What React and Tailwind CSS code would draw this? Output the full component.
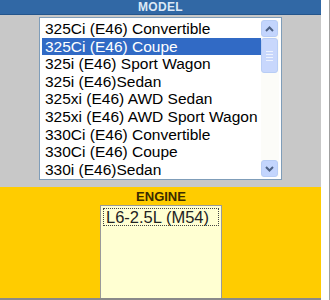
const models = [
  '325Ci (E46) Convertible',
  '325Ci (E46) Coupe',
  '325i (E46) Sport Wagon',
  '325i (E46)Sedan',
  '325xi (E46) AWD Sedan',
  '325xi (E46) AWD Sport Wagon',
  '330Ci (E46) Convertible',
  '330Ci (E46) Coupe',
  '330i (E46)Sedan',
]

function ScrollButton({ up }) {
  return (
    <div className="h-[17px] w-[17px] rounded-[3px] border border-[#b8cdf5] bg-[#c3d5fd] flex items-center justify-center">
      <svg width="9" height="6" viewBox="0 0 9 6">
        <path
          d={up ? 'M1 5 L4.5 1.5 L8 5' : 'M1 1 L4.5 4.5 L8 1'}
          fill="none"
          stroke="#4d6185"
          strokeWidth="2"
        />
      </svg>
    </div>
  )
}

export default function App() {
  return (
    <div className="w-[330px] h-[300px] flex bg-white" style={{ fontFamily: '"Liberation Sans", Arial, sans-serif' }}>
      <div className="w-[321px] flex flex-col">
        {/* Model */}
        <div className="h-[15px] bg-[#3168a5] border-b border-[#24558c] flex items-center justify-center">
          <span className="text-[12px] font-bold text-[#dce8f6] leading-none tracking-[0.3px]">MODEL</span>
        </div>
        <div className="h-[172px] bg-[#c8c8c8] pt-[2px] pl-[39px]">
          <div className="w-[243px] h-[163px] border border-[#7f9db9] bg-white flex p-[2px]">
            <div className="flex-1 flex flex-col">
              {models.map((m, i) => (
                <div
                  key={m}
                  className={
                    'h-[17.6px] pl-[3px] text-[15.5px] leading-[17.6px] whitespace-nowrap ' +
                    (i === 1 ? 'bg-[#316ac5] text-white' : 'text-black')
                  }
                >
                  {m}
                </div>
              ))}
            </div>
            <div className="w-[18px] bg-[#fcfcf8] flex flex-col justify-between">
              <ScrollButton up />
              <div className="flex-1 pt-[1px]">
                <div className="h-[35px] w-[17px] rounded-[3px] border border-[#b8cdf5] bg-[#c8d7fc] flex flex-col items-center justify-center gap-[2px]">
                  <div className="w-[7px] h-px bg-[#eef3fe]"></div>
                  <div className="w-[7px] h-px bg-[#eef3fe]"></div>
                  <div className="w-[7px] h-px bg-[#eef3fe]"></div>
                  <div className="w-[7px] h-px bg-[#eef3fe]"></div>
                </div>
              </div>
              <ScrollButton />
            </div>
          </div>
        </div>
        {/* Engine */}
        <div className="flex-1 bg-[#ffcc00] flex flex-col items-center border-b-2 border-[#8a8a8a]">
          <div className="h-[18px] flex items-center text-[13px] font-bold text-[#3a2a00] leading-none pl-[1px]">ENGINE</div>
          <div className="w-[122px] flex-1 border border-[#9a9a9a] border-b-0 bg-[#ffffd2] p-[2px] ml-[1px]">
            <div className="border border-dotted border-[#444] h-[18px] pl-[2px] text-[16.5px] leading-[16px] text-[#222]">
              L6-2.5L (M54)
            </div>
          </div>
        </div>
      </div>
      <div className="w-[8px] bg-white"></div>
      <div className="w-px bg-[#a0a0a0]"></div>
    </div>
  )
}
